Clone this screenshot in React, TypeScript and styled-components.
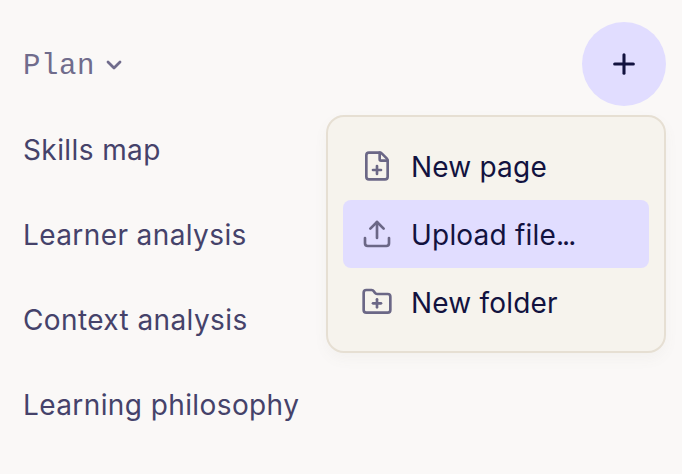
import { createGlobalStyle } from 'styled-components';
import styled from 'styled-components';
import { ChevronDown, FilePlus, FolderPlus, Plus, Upload } from 'lucide-react';

const GlobalStyle = createGlobalStyle`
  html, body {
    margin: 0;
    padding: 0;
    background-color: #faf8f7;
  }
`;

const Page = styled.div`
  width: 682px;
  height: 474px;
  box-sizing: border-box;
  padding: 22px 16px 0 23px;
  display: flex;
  justify-content: space-between;
  align-items: flex-start;
  overflow: hidden;
`;

const Nav = styled.nav`
  display: flex;
  flex-flow: column;
`;

const SectionTitle = styled.div`
  height: 85px;
  padding-top: 3px;
  box-sizing: border-box;
  display: flex;
  align-items: center;
  gap: 7px;
  font-family: 'Liberation Mono', monospace;
  font-size: 29px;
  letter-spacing: 0.6px;
  color: #706c8c;
  svg {
    margin-top: -3px;
  }
`;

const NavLink = styled.a`
  height: 85px;
  display: flex;
  align-items: center;
  font-family: 'Inter', sans-serif;
  font-size: 28px;
  letter-spacing: 0.4px;
  color: #45426a;
`;

const Actions = styled.div`
  display: flex;
  flex-flow: column;
  align-items: flex-end;
  gap: 9px;
`;

const RoundButton = styled.button`
  width: 84px;
  height: 84px;
  border: 0;
  border-radius: 50%;
  padding: 0;
  display: flex;
  align-items: center;
  justify-content: center;
  background-color: #e1ddff;
  color: #12123f;
`;

const Menu = styled.ul`
  list-style: none;
  margin: 0;
  width: 340px;
  height: 238px;
  box-sizing: border-box;
  padding: 15px;
  display: flex;
  flex-flow: column;
  border: 2px solid #e6dfd3;
  border-radius: 18px;
  background-color: #f6f3ed;
  box-shadow: 0 6px 14px rgba(120, 110, 90, 0.05);
`;

const MenuItem = styled.li<{ $active?: boolean }>`
  height: 68px;
  flex: none;
  padding: 2px 18px 0;
  box-sizing: border-box;
  display: flex;
  align-items: center;
  gap: 18px;
  border-radius: 8px;
  background-color: ${({ $active }) => ($active ? '#e1ddff' : 'transparent')};
  font-family: 'Inter', sans-serif;
  font-size: 28px;
  letter-spacing: 0.2px;
  color: #12123f;
  svg {
    color: #6b6786;
    flex: none;
    margin-top: -2px;
  }
`;

const Dots = styled.span`
  letter-spacing: -2px;
`;

const links = ['Skills map', 'Learner analysis', 'Context analysis', 'Learning philosophy'];

const App = () => {
  return (
    <Page>
      <GlobalStyle />
      <Nav>
        <SectionTitle>
          Plan
          <ChevronDown size={24} strokeWidth={2.8} />
        </SectionTitle>
        {links.map((link) => (
          <NavLink key={link}>{link}</NavLink>
        ))}
      </Nav>
      <Actions>
        <RoundButton>
          <Plus size={32} strokeWidth={2.3} />
        </RoundButton>
        <Menu>
          <MenuItem>
            <FilePlus size={32} strokeWidth={2} />
            New page
          </MenuItem>
          <MenuItem $active>
            <Upload size={32} strokeWidth={2} />
            <span>
              Upload file<Dots>...</Dots>
            </span>
          </MenuItem>
          <MenuItem>
            <FolderPlus size={32} strokeWidth={2} />
            New folder
          </MenuItem>
        </Menu>
      </Actions>
    </Page>
  );
};

export default App;
